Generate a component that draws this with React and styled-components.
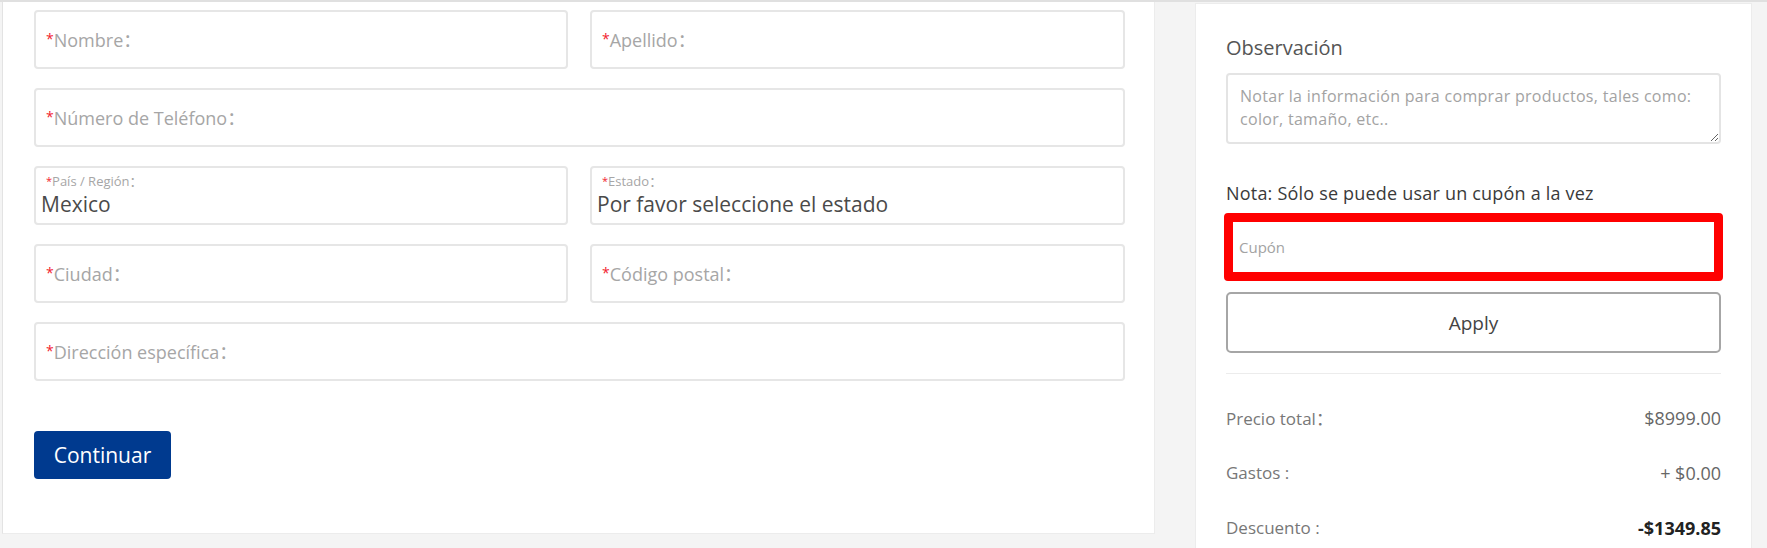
import React from "react";
import styled, { createGlobalStyle } from "styled-components";

const Global = createGlobalStyle`
  html, body { margin: 0; padding: 0; }
  body {
    background: #f4f4f4;
    font-family: "Open Sans", "Noto Sans CJK SC", sans-serif;
    color: #333;
  }
  * { box-sizing: border-box; }
`;

const Page = styled.div`
  border-top: 2px solid #e0e0e0;
  display: flex;
  align-items: flex-start;
  gap: 40px;
  padding-left: 2px;
  min-height: 546px;
`;

const FormPanel = styled.section`
  width: 1153px;
  background: #fff;
  border-left: 1px solid #e3e3e3;
  border-right: 1px solid #ececec;
  border-bottom: 1px solid #ececec;
  padding: 8px 29px 54px 31px;
`;

const Grid = styled.div`
  display: grid;
  grid-template-columns: 534px 535px;
  column-gap: 22px;
  row-gap: 19px;
`;

const Field = styled.div`
  grid-column: ${(p) => (p.$wide ? "1 / -1" : "auto")};
  height: 59px;
  border: 2px solid #e6e6e6;
  border-radius: 4px;
  background: #fff;
  display: flex;
  flex-direction: column;
  justify-content: ${(p) => (p.$select ? "flex-start" : "center")};
  padding: ${(p) => (p.$select ? "4px 0 0 10px" : "0 0 0 10px")};
`;

const Label = styled.span`
  font-size: ${(p) => (p.$small ? "13px" : "18px")};
  line-height: ${(p) => (p.$small ? "18px" : "24px")};
  color: #a6a6a6;
  white-space: nowrap;
`;

const Star = styled.span`
  color: #f2232e;
  font-size: ${(p) => (p.$small ? "11px" : "14px")};
  vertical-align: ${(p) => (p.$small ? "1px" : "3px")};
`;

const Value = styled.span`
  font-size: 21px;
  line-height: 28px;
  color: #4a4a4a;
  margin-left: -5px;
  white-space: nowrap;
`;

const Continue = styled.button`
  margin-top: 50px;
  width: 137px;
  height: 48px;
  border: none;
  border-radius: 4px;
  background: #003a8f;
  color: #fff;
  font-family: inherit;
  font-size: 21px;
  padding: 0;
  cursor: pointer;
`;

const SidePanel = styled.aside`
  width: 557px;
  margin-top: 1px;
  background: #fff;
  border: 1px solid #ececec;
  border-bottom: none;
  padding: 30px 30px 40px 30px;
  display: flex;
  flex-direction: column;
`;

const Heading = styled.h3`
  margin: 0;
  font-size: 20px;
  line-height: 28px;
  font-weight: 400;
  color: #555;
`;

const Notes = styled.textarea`
  margin-top: 11px;
  height: 71px;
  width: 100%;
  border: 2px solid #e4e4e4;
  border-radius: 4px;
  padding: 10px 12px;
  font-family: inherit;
  font-size: 16px;
  letter-spacing: 0.3px;
  line-height: 23px;
  color: #555;
  outline: none;
  &::placeholder { color: #a3a3a3; }
`;

const Note = styled.p`
  margin: 37px 0 0 0;
  font-size: 18px;
  letter-spacing: 0.2px;
  line-height: 24px;
  color: #3a3a3a;
`;

const Highlight = styled.div`
  margin: 8px -2px 0 -2px;
  height: 68px;
  border: 9px solid #ff0000;
  border-radius: 4px;
  display: flex;
`;

const Coupon = styled.input`
  flex: 1;
  border: none;
  outline: none;
  padding: 0 6px;
  font-family: inherit;
  font-size: 15px;
  color: #555;
  &::placeholder { color: #a3a3a3; }
`;

const Apply = styled.button`
  margin-top: 11px;
  height: 61px;
  width: 100%;
  background: #fff;
  border: 2px solid #a6a6a6;
  border-radius: 5px;
  font-family: inherit;
  font-size: 19px;
  color: #444;
  cursor: pointer;
`;

const Divider = styled.hr`
  margin: 20px 0 16px 0;
  border: none;
  border-top: 1px solid #ececec;
  height: 0;
`;

const Row = styled.div`
  height: 55px;
  display: flex;
  align-items: center;
  justify-content: space-between;
  font-size: 17px;
  color: #777;
`;

const Amount = styled.span`
  color: ${(p) => (p.$strong ? "#222" : "#666")};
  font-weight: ${(p) => (p.$strong ? 700 : 400)};
  font-size: 18px;
`;

const textFields = [
  { label: "Nombre" },
  { label: "Apellido" },
  { label: "Número de Teléfono", wide: true },
];

function TextField({ label, wide }) {
  return (
    <Field $wide={wide}>
      <Label>
        <Star>*</Star>
        {label}：
      </Label>
    </Field>
  );
}

function SelectField({ label, value }) {
  return (
    <Field $select>
      <Label $small>
        <Star $small>*</Star>
        {label}：
      </Label>
      <Value>{value}</Value>
    </Field>
  );
}

export default function App() {
  return (
    <>
      <Global />
      <Page>
        <FormPanel>
          <Grid>
            {textFields.map((f) => (
              <TextField key={f.label} {...f} />
            ))}
            <SelectField label="País / Región" value="Mexico" />
            <SelectField label="Estado" value="Por favor seleccione el estado" />
            <TextField label="Ciudad" />
            <TextField label="Código postal" />
            <TextField label="Dirección específica" wide />
          </Grid>
          <Continue>Continuar</Continue>
        </FormPanel>
        <SidePanel>
          <Heading>Observación</Heading>
          <Notes placeholder="Notar la información para comprar productos, tales como: color, tamaño, etc.." />
          <Note>Nota: Sólo se puede usar un cupón a la vez</Note>
          <Highlight>
            <Coupon placeholder="Cupón" />
          </Highlight>
          <Apply>Apply</Apply>
          <Divider />
          <Row>
            <span>Precio total：</span>
            <Amount>$8999.00</Amount>
          </Row>
          <Row>
            <span>Gastos :</span>
            <Amount>+ $0.00</Amount>
          </Row>
          <Row>
            <span>Descuento :</span>
            <Amount $strong>-$1349.85</Amount>
          </Row>
        </SidePanel>
      </Page>
    </>
  );
}
